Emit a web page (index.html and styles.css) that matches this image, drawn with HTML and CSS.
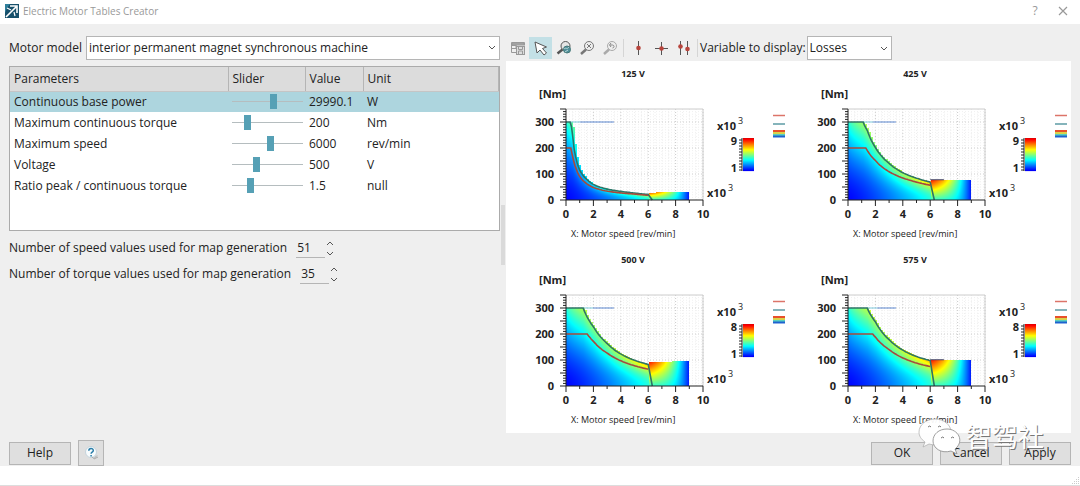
FILE: index.html
```html
<!DOCTYPE html>
<html lang="en">
<head>
    <meta charset="utf-8">
    <title>Electric Motor Tables Creator</title>
    <link rel="stylesheet" href="styles.css">
</head>
<body>
    <header class="titlebar">
        <svg class="logo" viewBox="0 0 14 14" width="14" height="14">
            <rect width="14" height="14" fill="#17506b"/>
            <path d="M0 0h5L2 4 0 9z" fill="#2f7f9b"/>
            <path d="M1 13L6 8 11 3M5 2h7v7" fill="none" stroke="#fff" stroke-width="1.6"/>
            <path d="M2 4l4 2M9 8l1 4" fill="none" stroke="#fff" stroke-width="1.2"/>
        </svg>
        <h1>Electric Motor Tables Creator</h1>
        <button class="win-btn" aria-label="What's this">?</button>
        <button class="win-btn" aria-label="Close">
            <svg viewBox="0 0 10 10" width="10" height="10"><path d="M1 1l8 8M9 1l-8 8" stroke="#999" stroke-width="1.2"/></svg>
        </button>
    </header>

    <main class="dialog">
        <div class="content">
            <section class="settings">
                <div class="model-row">
                    <label for="model">Motor model</label>
                    <select id="model">
                        <option>interior permanent magnet synchronous machine</option>
                    </select>
                </div>

                <div class="table-box">
                    <table>
                        <colgroup>
                            <col class="col-name"><col class="col-slider"><col class="col-value"><col>
                        </colgroup>
                        <thead>
                            <tr><th>Parameters</th><th>Slider</th><th>Value</th><th>Unit</th></tr>
                        </thead>
                        <tbody>
                            <tr class="selected">
                                <td>Continuous base power</td>
                                <td><input type="range" value="60" aria-label="Continuous base power"></td>
                                <td>29990.1</td><td>W</td>
                            </tr>
                            <tr>
                                <td>Maximum continuous torque</td>
                                <td><input type="range" value="18" aria-label="Maximum continuous torque"></td>
                                <td>200</td><td>Nm</td>
                            </tr>
                            <tr>
                                <td>Maximum speed</td>
                                <td><input type="range" value="55" aria-label="Maximum speed"></td>
                                <td>6000</td><td>rev/min</td>
                            </tr>
                            <tr>
                                <td>Voltage</td>
                                <td><input type="range" value="33" aria-label="Voltage"></td>
                                <td>500</td><td>V</td>
                            </tr>
                            <tr>
                                <td>Ratio peak / continuous torque</td>
                                <td><input type="range" value="24" aria-label="Ratio peak / continuous torque"></td>
                                <td>1.5</td><td>null</td>
                            </tr>
                        </tbody>
                    </table>
                </div>

                <div class="spin-row">
                    <label for="speedCount">Number of speed values used for map generation</label>
                    <input type="number" id="speedCount" value="51">
                    <div class="spin-btns">
                        <button aria-label="More speed values"><svg viewBox="0 0 8 5" width="8" height="5"><path d="M1 4l3-3 3 3"/></svg></button>
                        <button aria-label="Fewer speed values"><svg viewBox="0 0 8 5" width="8" height="5"><path d="M1 1l3 3 3-3"/></svg></button>
                    </div>
                </div>
                <div class="spin-row">
                    <label for="torqueCount">Number of torque values used for map generation</label>
                    <input type="number" id="torqueCount" value="35">
                    <div class="spin-btns">
                        <button aria-label="More torque values"><svg viewBox="0 0 8 5" width="8" height="5"><path d="M1 4l3-3 3 3"/></svg></button>
                        <button aria-label="Fewer torque values"><svg viewBox="0 0 8 5" width="8" height="5"><path d="M1 1l3 3 3-3"/></svg></button>
                    </div>
                </div>
            </section>

            <div class="splitter"></div>

            <section class="preview">
                <div class="toolbar">
                    <button class="tool" aria-label="Table view">
                        <svg viewBox="0 0 16 16" width="16" height="16" fill="none" stroke="#999">
                            <path d="M6.500 12.500h-5v-10h13v3M1.500 5.500h5M1.500 8.500h5M6 2.500v6" />
                            <path d="M2 3h12v2H2z" fill="#aaa"/>
                            <rect x="6.500" y="6.500" width="8" height="8" fill="#ddd"/>
                            <path d="M8.500 6.500v3h4v-3M8.500 14v-3h4v3"/>
                        </svg>
                    </button>
                    <button class="tool active" aria-label="Select">
                        <svg viewBox="0 0 16 16" width="16" height="16"><path d="M2 2l2 11 3-3 4 5 2.500-2-4-4.500 4-1.500z" fill="#fff" stroke="#555" stroke-linejoin="round"/></svg>
                    </button>
                    <button class="tool" aria-label="Zoom to map">
                        <svg viewBox="0 0 16 16" width="16" height="16" fill="none" stroke="#555">
                            <circle cx="9.500" cy="6" r="4.500" fill="#e5e5e5"/><path d="M6.500 9.500l-5 4" stroke-width="2.500"/>
                            <circle cx="11" cy="9.500" r="3.500" fill="#4f8f9b" stroke="#477"/><path d="M8 9c2-2 3 1 5-2M9 12l3-2" stroke="#b8d6d5"/>
                        </svg>
                    </button>
                    <button class="tool" aria-label="Fit zoom">
                        <svg viewBox="0 0 16 16" width="16" height="16" fill="none" stroke="#777">
                            <circle cx="10" cy="6" r="4.500" fill="#eee"/><path d="M8 4l4 4M12 4l-4 4" /><path d="M7 9.500l-5 4.500" stroke-width="2.500"/>
                        </svg>
                    </button>
                    <button class="tool" aria-label="Previous zoom">
                        <svg viewBox="0 0 16 16" width="16" height="16" fill="none" stroke="#aaa">
                            <circle cx="10" cy="6" r="4.500" fill="#eee"/><path d="M9 3L7.500 5 9 7M8 5h2.500c2 0 2 3 0 3" stroke="#888"/><path d="M7 9.500l-5 4.500" stroke-width="2.500"/>
                        </svg>
                    </button>
                    <span class="sep"></span>
                    <button class="tool" aria-label="Vertical cursor">
                        <svg viewBox="0 0 16 16" width="16" height="16"><path d="M8.500 1v14" stroke="#555"/><circle cx="8.500" cy="8" r="2.300" fill="#b8443c"/></svg>
                    </button>
                    <button class="tool" aria-label="Cross cursor">
                        <svg viewBox="0 0 16 16" width="16" height="16"><path d="M8.500 2v13M2 8.500h13" stroke="#555"/><circle cx="8.500" cy="8.500" r="2.300" fill="#b8443c"/></svg>
                    </button>
                    <button class="tool" aria-label="Double cursor">
                        <svg viewBox="0 0 16 16" width="16" height="16"><path d="M4.500 1v14M11.500 1v14" stroke="#555"/><circle cx="4.500" cy="6.500" r="2.300" fill="#b8443c"/><circle cx="11.500" cy="9" r="2.300" fill="#b8443c"/></svg>
                    </button>
                    <span class="sep"></span>
                    <label for="variable">Variable to display:</label>
                    <select id="variable" class="variable">
                        <option>Losses</option>
                    </select>
                </div>
                <div class="charts" id="charts"></div>
            </section>
        </div>

        <footer class="actions">
            <button class="btn">Help</button>
            <button class="btn btn-info" aria-label="Context help">
                <svg viewBox="0 0 16 16" width="16" height="16">
                    <circle cx="8" cy="7" r="5.500" fill="#f7fbfd" stroke="#c5d4dc"/>
                    <path d="M5.800 5.800c0-3.200 4.600-3 4.500-.3 0 1.600-2.200 1.700-2.200 3.200M8.100 10v1.500" fill="none" stroke="#2b7ea8" stroke-width="1.500"/>
                    <path d="M9 12l2 1.500 3-3M11 14l4-2" fill="none" stroke="#aaa"/>
                </svg>
            </button>
            <span class="spacer"></span>
            <button class="btn">OK</button>
            <button class="btn">Cancel</button>
            <button class="btn">Apply</button>
        </footer>
    </main>

    <div class="statusbar">
        <svg viewBox="0 0 8 8" width="8" height="8" fill="#ccc"><path d="M6 0h1v1H6zM4 2h1v1H4zM6 2h1v1H6zM2 4h1v1H2zM4 4h1v1H4zM6 4h1v1H6zM0 6h1v1H0zM2 6h1v1H2zM4 6h1v1H4zM6 6h1v1H6z"/></svg>
    </div>

    <div class="watermark">
        <svg viewBox="0 0 44 36" width="44" height="36">
            <path d="M17 1C8 1 1 7 1 14c0 4 2 7 6 10l-2 5 6-3c10 3 22-2 22-12C33 7 26 1 17 1z" fill="#fff" fill-opacity=".94" stroke="#aaa" stroke-width=".7"/>
            <path d="M29 11c-8 0-14 5-14 12s8 13 18 10l6 3-2-5c10-8 3-20-8-20z" fill="#fff" stroke="#888" stroke-width=".8"/>
            <path d="M10 9q2-2 3 0M20 9q2-2 3 0M23 20q2-2 3 0M33 20q2-2 3 0" fill="none" stroke="#777"/>
        </svg>
        <span>智驾社</span>
    </div>

    <script src="script.js"></script>
</body>
</html>
```
FILE: styles.css
```css
* {
    box-sizing: border-box;
}
body {
    margin: 0;
    min-height: 100vh;
    display: flex;
    flex-direction: column;
    position: relative;
    background-color: #fff;
    color: #222;
    font-family: "Open Sans", "Noto Sans", sans-serif;
    font-size: 12px;
    line-height: 16px;
}
button, input, select {
    font: inherit;
    color: inherit;
    margin: 0;
}
button {
    padding: 0;
    border: none;
    background: none;
}
svg {
    display: block;
}

/* title bar */
.titlebar {
    display: flex;
    align-items: center;
    height: 24px;
    padding: 0 10px 2px 5px;
    gap: 4px;
}
.titlebar h1 {
    flex: 1;
    margin: 0;
    color: #999;
    font-size: 10px;
    font-weight: normal;
}
.win-btn {
    width: 34px;
    height: 20px;
    display: flex;
    align-items: center;
    justify-content: center;
    color: #999;
}
.win-btn:last-child {
    width: 14px;
}

.dialog {
    flex: 1;
    display: flex;
    flex-direction: column;
    padding: 11px 9px 0;
    background-color: #efefef;
}
.content {
    flex: 1;
    display: flex;
}

/* left side */
.settings {
    flex: 491;
    min-width: 0;
}
.model-row {
    display: flex;
    align-items: center;
    gap: 4px;
    height: 25px;
    margin-bottom: 6px;
}
select {
    flex: 1;
    height: 24px;
    padding: 0 14px 0 2px;
    border: 1px solid #b5b5b5;
    border-radius: 0;
    appearance: none;
    background: #fff url("data:image/svg+xml,%3Csvg xmlns='http://www.w3.org/2000/svg' width='8' height='5'%3E%3Cpath d='M1 1l3 3 3-3' fill='none' stroke='%23555'/%3E%3C/svg%3E") no-repeat right 3px center;
}
.table-box {
    height: 165px;
    border: 1px solid #ababab;
    background-color: #fff;
    margin-bottom: 4px;
}
table {
    width: 100%;
    table-layout: fixed;
    border-collapse: collapse;
}
.col-name {
    width: 218px;
}
.col-slider {
    width: 77px;
}
.col-value {
    width: 58px;
}
th {
    height: 24px;
    padding: 0 4px;
    background-color: #dcdcdc;
    border-right: 1px solid #b5b5b5;
    border-bottom: 1px solid #c5c5c5;
    font-weight: normal;
    text-align: left;
}
td {
    height: 21px;
    padding: 0 4px;
    white-space: nowrap;
}
.selected {
    background-color: #add5de;
}
input[type=range] {
    display: block;
    width: 71px;
    height: 16px;
    appearance: none;
    background: linear-gradient(#b5bdbf, #b5bdbf) no-repeat center / 100% 1px;
}
input[type=range]::-webkit-slider-thumb {
    appearance: none;
    width: 7px;
    height: 15px;
    background-color: #56a0b5;
}
.spin-row {
    display: flex;
    align-items: center;
    height: 26px;
}
.spin-row input {
    width: 29px;
    height: 20px;
    margin: 0 0 0 9px;
    padding: 0 1px;
    border: none;
    border-bottom: 1px solid #b5b5b5;
    background: none;
    appearance: textfield;
}
.spin-row input::-webkit-inner-spin-button {
    appearance: none;
}
.spin-btns {
    display: flex;
    flex-direction: column;
    gap: 5px;
    margin-left: 1px;
}
.spin-btns path {
    fill: none;
    stroke: #555;
}

.splitter {
    width: 4px;
    height: 60px;
    margin: 170px 1px 0;
    background-color: #dadada;
}

/* right side */
.preview {
    flex: 565;
    min-width: 0;
    display: flex;
    flex-direction: column;
}
.toolbar {
    display: flex;
    align-items: center;
    height: 26px;
}
.tool {
    width: 23px;
    height: 22px;
    display: flex;
    align-items: center;
    justify-content: center;
}
.tool.active {
    background-color: #c3e0e6;
}
.sep {
    width: 1px;
    height: 18px;
    margin: 0 2px;
    background-color: #d5d5d5;
}
.variable {
    flex: 0 0 85px;
    margin-left: 1px;
}
.charts {
    flex: 1;
    display: grid;
    grid-template-columns: 1fr 1fr;
    align-content: start;
    padding-right: 1px;
    background-color: #fff;
}
.chart {
    width: 100%;
    font-size: 11px;
}
.chart text {
    fill: #222;
}
.chart .bold {
    font-weight: bold;
}
.chart .small {
    font-size: 9px;
}

/* bottom buttons */
.actions {
    display: flex;
    align-items: center;
    gap: 7px;
    height: 33px;
    padding-top: 7px;
}
.btn {
    width: 62px;
    height: 23px;
    border: 1px solid #b5b5b5;
    background-color: #dfdfdf;
}
.btn-info {
    width: 26px;
    height: 26px;
    display: flex;
    align-items: center;
    justify-content: center;
}
.spacer {
    flex: 1;
}
.statusbar {
    display: flex;
    justify-content: flex-end;
    align-items: flex-end;
    height: 20px;
    border-bottom: 1px solid #ddd;
}

.watermark {
    position: absolute;
    right: 36px;
    bottom: 32px;
    display: flex;
    align-items: center;
    gap: 4px;
    color: #fff;
    font-family: "Noto Sans CJK SC", sans-serif;
    font-size: 26px;
    line-height: 36px;
    text-shadow: 1px 1px 0 #777;
}
```
FILE: script.js
```javascript
// speed in 1000 rev/min, torque in Nm
const maps = [
    {
        title: '125 V', max: 9, tail: 32,
        peak: [[0.3, 300], [0.45, 275], [0.6, 195], [0.8, 145], [1, 115], [1.5, 80], [2, 60], [3, 42], [4, 33], [5, 27], [6, 21]],
        cont: [[0.35, 200], [0.5, 165], [0.8, 112], [1, 90], [1.5, 63], [2, 48], [3, 34], [4, 27], [5, 23], [6, 18]]
    },
    {
        title: '425 V', max: 9, tail: 78,
        peak: [[1.1, 300], [1.4, 268], [2, 202], [3, 141], [4, 105], [5, 84], [6, 69]],
        cont: [[1.3, 200], [2, 152], [3, 109], [4, 85], [5, 69], [6, 57]]
    },
    {
        title: '500 V', max: 8, tail: 95,
        peak: [[1.25, 300], [2, 228], [3, 164], [4, 123], [5, 99], [6, 83]],
        cont: [[1.55, 200], [2, 172], [3, 127], [4, 97], [5, 78], [6, 65]]
    },
    {
        title: '575 V', max: 8, tail: 101,
        peak: [[1.4, 300], [2, 247], [3, 178], [4, 138], [5, 113], [6, 98]],
        cont: [[1.8, 200], [2, 188], [3, 140], [4, 108], [5, 88], [6, 75]]
    }
];

const X0 = 60, Y0 = 139, W = 137, H = 91;
const px = s => X0 + s * W / 10;
const py = t => Y0 - t * H / 350;

function jet(v) {
    const c = k => Math.round(255 * Math.max(0, Math.min(1, 1.5 - Math.abs(4 * v - k))));
    return `rgb(${c(3)},${c(2)},${c(1)})`;
}

function limit(points, s) {
    if (s <= points[0][0]) return points[0][1];
    for (let i = 1; i < points.length; i++) {
        const [a, ta] = points[i - 1], [b, tb] = points[i];
        if (s <= b) return ta * Math.pow(tb / ta, Math.log(s / a) / Math.log(b / a));
    }
    return points[points.length - 1][1];
}

function losses(map, s, t) {
    if (s <= 6) {
        const top = limit(map.peak, s);
        return 0.13 + 0.27 * Math.pow(t / 300, 1.5) + 0.28 * Math.pow(s / 6, 1.3) + 0.27 * Math.sqrt(s / 6) * Math.pow(Math.min(1, t / top), 2);
    }
    const u = (s - 6) / 3;
    return 0.13 + (1 - u * u * u) * (0.3 + 0.45 * (t / map.tail) * (1 - u));
}

function line(points) {
    let d = `M${px(0)} ${py(points[0][1])}`;
    for (let s = points[0][0]; s < 6; s += 0.1) d += `L${px(s).toFixed(1)} ${py(limit(points, s)).toFixed(1)}`;
    return d + `L${px(6)} ${py(points[points.length - 1][1])}`;
}

function drawChart(map, index) {
    let out = '';
    // grid
    for (let i = 1; i <= 20; i++) out += `<path d="M${px(i / 2)} ${Y0 - H}V${Y0}" stroke="${i % 4 ? '#eee' : '#ccc'}" stroke-dasharray="1 2"/>`;
    for (let t = 10; t < 350; t += 10) out += `<path d="M${X0} ${py(t)}H${X0 + W}" stroke="${t % 100 ? '#f0f0f0' : '#ccc'}" stroke-dasharray="1 2"/>`;
    out += `<path d="M${X0} ${Y0 - H}h${W}v${H}" fill="none" stroke="#ccc"/>`;

    // loss map
    const step = 1;
    out += '<g shape-rendering="crispEdges">';
    for (let x = 0; x < px(9) - X0 - 0.5; x += step) {
        const s = x * 10 / W;
        const stair = Math.floor(s / 0.15) * 0.15;
        const top = s > 6 ? map.tail - (index % 2 ? 0 : Math.max(0, 8 - s) * 2) : limit(map.peak, stair - 0.05);
        const h = top * H / 350;
        for (let y = 0; y < h; y += step) {
            const ch = Math.min(step, h - y);
            out += `<rect x="${X0 + x}" y="${(Y0 - y - ch).toFixed(1)}" width="${step}" height="${ch}" fill="${jet(losses(map, s, y * 350 / H))}"/>`;
        }
    }
    out += '</g>';

    // limits
    out += `<path d="M${px(map.peak[0][0])} ${py(300)}h10" stroke="#7cc9dc"/><path d="M${px(map.peak[0][0]) + 10} ${py(300)}H${px(3.5)}" stroke="#5b86cf"/>`;
    if (index % 2) out += `<path d="M${px(6)} ${py(map.tail)}H${px(7)}" stroke="#446"/>`;
    out += `<path d="${line(map.peak)}L${px(6.3)} ${Y0}" fill="none" stroke="#2c7468" stroke-width="1.6"/>`;
    out += `<path d="${line(map.cont)}" fill="none" stroke="#a8493d" stroke-width="1.6"/>`;

    // axes
    out += `<path d="M${X0} ${Y0 - H}V${Y0}H${X0 + W}" fill="none" stroke="#222"/>`;
    for (let t = 0; t <= 350; t += 10) out += `<path d="M${X0} ${py(t)}h${t % 50 ? -3 : -6}" stroke="#222"/>`;
    for (let s = 0; s <= 10; s++) out += `<path d="M${px(s)} ${Y0}v${s % 2 ? 3 : 6}" stroke="#222"/>`;
    for (let t = 0; t <= 300; t += 100) out += `<text class="bold" x="${X0 - 12}" y="${py(t) + 4}" text-anchor="end">${t}</text>`;
    for (let s = 0; s <= 10; s += 2) out += `<text class="bold" x="${px(s)}" y="${Y0 + 18}" text-anchor="middle">${s}</text>`;

    out += `<text class="bold small" x="127" y="16" text-anchor="middle">${map.title}</text>`;
    out += '<text class="bold" x="33" y="37">[Nm]</text>';
    out += '<text class="bold" x="201" y="136">x10</text><text class="small" x="222" y="130">3</text>';
    out += '<text class="bold" x="211" y="69">x10</text><text class="small" x="232" y="63">3</text>';
    out += '<text class="small" x="65" y="176">X: Motor speed [rev/min]</text>';

    // colour scale
    for (let i = 0; i < 33; i++) out += `<rect x="237" y="${77 + i}" width="11" height="1.1" fill="${jet(0.9 - i * 0.78 / 32)}"/>`;
    out += '<path d="M236 77v33" stroke="#222"/>';
    for (let y = 79; y < 110; y += 3) out += `<path d="M236 ${y}h-3" stroke="#222"/>`;
    out += `<text class="bold" x="231" y="84" text-anchor="end">${map.max}</text><text class="bold" x="231" y="111" text-anchor="end">1</text>`;

    // legend
    out += '<path d="M267 54.500h12" stroke="#dc7469" stroke-width="1.500"/><path d="M267 63h12" stroke="#5c9ba5" stroke-width="1.500"/>';
    out += '<path d="M267 70h12" stroke="#e8502a" stroke-width="2"/><path d="M267 72h12" stroke="#d8d24b" stroke-width="2"/><path d="M267 74h12" stroke="#58cfc0" stroke-width="2"/><path d="M267 75.500h12" stroke="#1e62d0" stroke-width="2"/>';

    return `<svg class="chart" viewBox="0 0 282 186" role="img" aria-label="${map.title}">${out}</svg>`;
}

document.getElementById('charts').innerHTML = maps.map(drawChart).join('');
```
